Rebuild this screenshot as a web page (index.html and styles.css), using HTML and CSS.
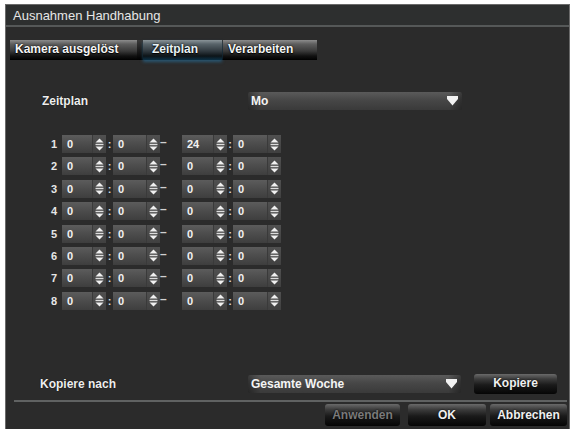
FILE: index.html
```html
<!DOCTYPE html>
<html lang="de">
<head>
<meta charset="utf-8">
<title>Ausnahmen Handhabung</title>
<link rel="stylesheet" href="styles.css">
</head>
<body>
<svg width="0" height="0" style="position:absolute">
  <defs>
    <symbol id="spin" viewBox="0 0 9 13"><path d="M4.5 0.5L8.5 4.5H0.5Z" fill="#f0f0f0"/><rect x="0.5" y="5.8" width="8" height="1.4" fill="#dcdcdc"/><path d="M0.5 8.5H8.5L4.5 12.5Z" fill="#f0f0f0"/></symbol>
    <symbol id="dd" viewBox="0 0 11 10"><path d="M0 0H11V3L5.5 9.5L0 3Z" fill="#f2f2f2"/></symbol>
  </defs>
</svg>
<div class="dialog">
  <div class="titlebar">Ausnahmen Handhabung</div>
  <div class="sep"></div>
  <div class="tabs">
    <div class="tab tab-cam">Kamera ausgelöst</div>
    <div class="tab tab-zeit active">Zeitplan</div>
    <div class="tab tab-verarb">Verarbeiten</div>
  </div>

  <div class="row-select">
    <div class="label">Zeitplan</div>
    <div class="dropdown"><span>Mo</span><svg class="dd-arrow" width="11" height="10"><use href="#dd"/></svg></div>
  </div>

  <div class="grid">
    <div class="trow"><div class="num">1</div>
      <div class="field f1"><span class="val">0</span><span class="arrows"><svg class="spin" width="9" height="13"><use href="#spin"/></svg></span></div><div class="colon">:</div>
      <div class="field f2"><span class="val">0</span><span class="arrows"><svg class="spin" width="9" height="13"><use href="#spin"/></svg></span></div><div class="dash">–</div>
      <div class="field f3"><span class="val">24</span><span class="arrows"><svg class="spin" width="9" height="13"><use href="#spin"/></svg></span></div><div class="colon c2">:</div>
      <div class="field f4"><span class="val">0</span><span class="arrows"><svg class="spin" width="9" height="13"><use href="#spin"/></svg></span></div>
    </div>
    <div class="trow"><div class="num">2</div>
      <div class="field f1"><span class="val">0</span><span class="arrows"><svg class="spin" width="9" height="13"><use href="#spin"/></svg></span></div><div class="colon">:</div>
      <div class="field f2"><span class="val">0</span><span class="arrows"><svg class="spin" width="9" height="13"><use href="#spin"/></svg></span></div><div class="dash">–</div>
      <div class="field f3"><span class="val">0</span><span class="arrows"><svg class="spin" width="9" height="13"><use href="#spin"/></svg></span></div><div class="colon c2">:</div>
      <div class="field f4"><span class="val">0</span><span class="arrows"><svg class="spin" width="9" height="13"><use href="#spin"/></svg></span></div>
    </div>
    <div class="trow"><div class="num">3</div>
      <div class="field f1"><span class="val">0</span><span class="arrows"><svg class="spin" width="9" height="13"><use href="#spin"/></svg></span></div><div class="colon">:</div>
      <div class="field f2"><span class="val">0</span><span class="arrows"><svg class="spin" width="9" height="13"><use href="#spin"/></svg></span></div><div class="dash">–</div>
      <div class="field f3"><span class="val">0</span><span class="arrows"><svg class="spin" width="9" height="13"><use href="#spin"/></svg></span></div><div class="colon c2">:</div>
      <div class="field f4"><span class="val">0</span><span class="arrows"><svg class="spin" width="9" height="13"><use href="#spin"/></svg></span></div>
    </div>
    <div class="trow"><div class="num">4</div>
      <div class="field f1"><span class="val">0</span><span class="arrows"><svg class="spin" width="9" height="13"><use href="#spin"/></svg></span></div><div class="colon">:</div>
      <div class="field f2"><span class="val">0</span><span class="arrows"><svg class="spin" width="9" height="13"><use href="#spin"/></svg></span></div><div class="dash">–</div>
      <div class="field f3"><span class="val">0</span><span class="arrows"><svg class="spin" width="9" height="13"><use href="#spin"/></svg></span></div><div class="colon c2">:</div>
      <div class="field f4"><span class="val">0</span><span class="arrows"><svg class="spin" width="9" height="13"><use href="#spin"/></svg></span></div>
    </div>
    <div class="trow"><div class="num">5</div>
      <div class="field f1"><span class="val">0</span><span class="arrows"><svg class="spin" width="9" height="13"><use href="#spin"/></svg></span></div><div class="colon">:</div>
      <div class="field f2"><span class="val">0</span><span class="arrows"><svg class="spin" width="9" height="13"><use href="#spin"/></svg></span></div><div class="dash">–</div>
      <div class="field f3"><span class="val">0</span><span class="arrows"><svg class="spin" width="9" height="13"><use href="#spin"/></svg></span></div><div class="colon c2">:</div>
      <div class="field f4"><span class="val">0</span><span class="arrows"><svg class="spin" width="9" height="13"><use href="#spin"/></svg></span></div>
    </div>
    <div class="trow"><div class="num">6</div>
      <div class="field f1"><span class="val">0</span><span class="arrows"><svg class="spin" width="9" height="13"><use href="#spin"/></svg></span></div><div class="colon">:</div>
      <div class="field f2"><span class="val">0</span><span class="arrows"><svg class="spin" width="9" height="13"><use href="#spin"/></svg></span></div><div class="dash">–</div>
      <div class="field f3"><span class="val">0</span><span class="arrows"><svg class="spin" width="9" height="13"><use href="#spin"/></svg></span></div><div class="colon c2">:</div>
      <div class="field f4"><span class="val">0</span><span class="arrows"><svg class="spin" width="9" height="13"><use href="#spin"/></svg></span></div>
    </div>
    <div class="trow"><div class="num">7</div>
      <div class="field f1"><span class="val">0</span><span class="arrows"><svg class="spin" width="9" height="13"><use href="#spin"/></svg></span></div><div class="colon">:</div>
      <div class="field f2"><span class="val">0</span><span class="arrows"><svg class="spin" width="9" height="13"><use href="#spin"/></svg></span></div><div class="dash">–</div>
      <div class="field f3"><span class="val">0</span><span class="arrows"><svg class="spin" width="9" height="13"><use href="#spin"/></svg></span></div><div class="colon c2">:</div>
      <div class="field f4"><span class="val">0</span><span class="arrows"><svg class="spin" width="9" height="13"><use href="#spin"/></svg></span></div>
    </div>
    <div class="trow"><div class="num">8</div>
      <div class="field f1"><span class="val">0</span><span class="arrows"><svg class="spin" width="9" height="13"><use href="#spin"/></svg></span></div><div class="colon">:</div>
      <div class="field f2"><span class="val">0</span><span class="arrows"><svg class="spin" width="9" height="13"><use href="#spin"/></svg></span></div><div class="dash">–</div>
      <div class="field f3"><span class="val">0</span><span class="arrows"><svg class="spin" width="9" height="13"><use href="#spin"/></svg></span></div><div class="colon c2">:</div>
      <div class="field f4"><span class="val">0</span><span class="arrows"><svg class="spin" width="9" height="13"><use href="#spin"/></svg></span></div>
    </div>
  </div>

  <div class="row-copy">
    <div class="label">Kopiere nach</div>
    <div class="dropdown"><span>Gesamte Woche</span><svg class="dd-arrow" width="11" height="10"><use href="#dd"/></svg></div>
    <div class="btn btn-copy">Kopiere</div>
  </div>

  <div class="sep2"></div>

  <div class="actions">
    <div class="btn btn-act disabled">Anwenden</div>
    <div class="btn btn-act btn-ok">OK</div>
    <div class="btn btn-act btn-cancel">Abbrechen</div>
  </div>
</div>
</body>
</html>
```

FILE: styles.css
```css
html, body {
  margin: 0;
  padding: 0;
  background: #ffffff;
}
body {
  font-family: "Liberation Sans", Arial, sans-serif;
  color: #f0f0f0;
}
.dialog {
  margin: 4px 0 0 5px;
  width: 565px;
  height: 425px;
  background: #2b2b2b;
  border: 1px solid #6a6a6a;
  border-bottom: none;
  display: flex;
  flex-direction: column;
  box-sizing: border-box;
  overflow: hidden;
}
.titlebar {
  height: 20px;
  line-height: 21px;
  padding-left: 7px;
  font-size: 13px;
  color: #e6e6e6;
  background: #2d2f2f;
}
.sep {
  height: 2px;
  background: #555858;
}
.tabs {
  margin-top: 13px;
  margin-left: 4px;
  height: 20px;
  display: flex;
  width: 307px;
  background: linear-gradient(#3a3a3a, #000);
}
.tab {
  height: 20px;
  line-height: 18px;
  font-size: 12px;
  font-weight: bold;
  color: #f4f4f4;
  text-shadow: 0 0 2px #000, 0 1px 1px #000;
  background: linear-gradient(#8c8c8c 0, #5e5e5e 20%, #3a3a3a 55%, #111 80%, #000 100%);
  box-sizing: border-box;
}
.tab-cam { width: 127px; padding-left: 5px; }
.tab-zeit { width: 79px; margin-left: 6px; padding-left: 9px; }
.tab-verarb { width: 94px; margin-left: 1px; padding-left: 5px; }
.tab.active {
  color: #e8f2f6;
  background: linear-gradient(#8a9498 0, #59646a 20%, #313a40 55%, #0d1418 80%, #0b3045 100%);
  box-shadow: 0 2px 3px rgba(40, 120, 170, 0.55);
}

.row-select, .row-copy {
  display: flex;
  align-items: center;
  height: 19px;
}
.row-select { margin-top: 31px; }
.label {
  font-size: 12px;
  font-weight: bold;
  color: #eeeeee;
  text-shadow: 0 0 1px #000;
}
.row-select .label { margin-left: 36px; width: 206px; }
.row-copy .label { margin-left: 34px; width: 208px; }

.dropdown {
  width: 214px;
  height: 18px;
  box-sizing: border-box;
  display: flex;
  align-items: center;
  justify-content: space-between;
  padding: 0 4px 0 3px;
  font-size: 12px;
  font-weight: bold;
  color: #f4f4f4;
  background:
    linear-gradient(90deg, rgba(0,0,0,0.35), rgba(0,0,0,0) 6%, rgba(0,0,0,0) 94%, rgba(0,0,0,0.35)),
    linear-gradient(#5a5a5a, #474747 45%, #3a3a3a);
  border-radius: 2px;
}
.row-copy .dropdown { width: 213px; }
.dd-arrow { display: block; }

.grid {
  margin-top: 25px;
  display: flex;
  flex-direction: column;
  gap: 4.4px;
}
.trow {
  display: flex;
  align-items: center;
  height: 18px;
}
.num {
  width: 56px;
  padding-right: 5px;
  text-align: right;
  font-size: 11px;
  font-weight: bold;
  color: #e6e6e6;
  box-sizing: border-box;
}
.field {
  height: 18px;
  box-sizing: border-box;
  display: flex;
  align-items: center;
  justify-content: space-between;
  background: linear-gradient(#5c5c5c, #4c4c4c 50%, #3e3e3e);
  font-size: 11px;
  font-weight: bold;
  color: #f2f2f2;
}
.val { padding-left: 5px; }
.arrows {
  width: 13px;
  height: 100%;
  display: flex;
  align-items: center;
  justify-content: center;
  border-left: 1px solid #3a3a3a;
  background: linear-gradient(#505050, #404040);
}
.spin { display: block; }
.f1 { width: 44px; }
.f2 { width: 47px; }
.f3 { width: 45px; }
.f4 { width: 48px; }
.colon {
  width: 7px;
  text-align: center;
  font-size: 11px;
  font-weight: bold;
  color: #d8d8d8;
}
.colon.c2 { width: 6px; }
.dash {
  width: 22px;
  font-size: 12px;
  font-weight: bold;
  color: #d0d0d0;
  line-height: 10px;
  align-self: flex-start;
  margin-top: 2px;
}

.row-copy {
  margin-top: 64px;
  height: 20px;
}
.btn {
  height: 20px;
  line-height: 19px;
  text-align: center;
  font-size: 12px;
  font-weight: bold;
  color: #f0f0f0;
  text-shadow: 0 0 2px #000;
  border-radius: 3px;
  background: linear-gradient(#6a6a6a 0, #3c3c3c 25%, #1a1a1a 55%, #050505 100%);
  box-sizing: border-box;
}
.btn-copy {
  width: 83px;
  margin-left: 13px;
}
.sep2 {
  margin: 6px 2px 0 8px;
  height: 2px;
  background: #606262;
}
.actions {
  margin-top: 2px;
  display: flex;
  justify-content: flex-end;
  padding-right: 2px;
  gap: 4px;
}
.btn-act {
  height: 22px;
  line-height: 22px;
}
.btn.disabled { width: 75px; color: #7a7a7a; margin-right: 4px; }
.btn-ok { width: 78px; }
.btn-cancel { width: 77px; }
```
